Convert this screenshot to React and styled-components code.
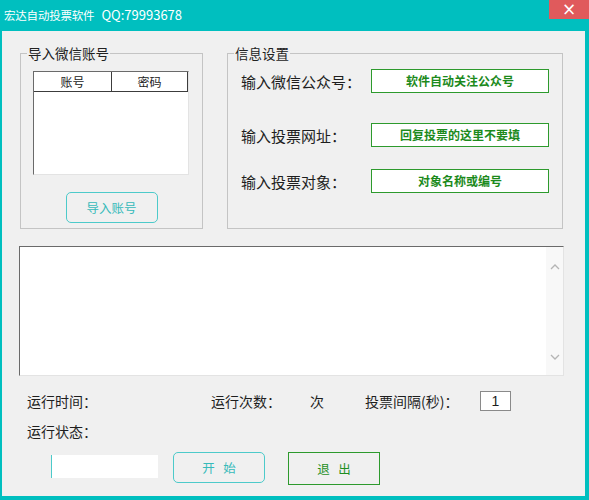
import styled, { createGlobalStyle } from "styled-components";

const GlobalStyle = createGlobalStyle`
  html, body {
    margin: 0;
    padding: 0;
    background: #ffffff;
  }
  * {
    box-sizing: border-box;
  }
`;

const FONT = `"Noto Sans CJK SC", "Noto Sans", "Liberation Sans", sans-serif`;

function App() {
  return (
    <>
      <GlobalStyle />
      <Window>
        <TitleBar>
          <Title>
            宏达自动投票软件<QQ>QQ:79993678</QQ>
          </Title>
          <CloseButton>×</CloseButton>
        </TitleBar>
        <Client>
          <TopRow>
            <GroupBox $width={183}>
              <Legend>导入微信账号</Legend>
              <AccountList>
                <ListHeader>
                  <HeaderCell $width={78}>账号</HeaderCell>
                  <HeaderCell $width={78} $last>
                    密码
                  </HeaderCell>
                </ListHeader>
              </AccountList>
              <RoundButton $width={92} $mt={17}>
                导入账号
              </RoundButton>
            </GroupBox>
            <GroupBox $width={336}>
              <Legend>信息设置</Legend>
              <SettingRow $mt={6}>
                <SettingLabel>输入微信公众号：</SettingLabel>
                <GreenField>软件自动关注公众号</GreenField>
              </SettingRow>
              <SettingRow $mt={30}>
                <SettingLabel>输入投票网址：</SettingLabel>
                <GreenField>回复投票的这里不要填</GreenField>
              </SettingRow>
              <SettingRow $mt={22}>
                <SettingLabel>输入投票对象：</SettingLabel>
                <GreenField>对象名称或编号</GreenField>
              </SettingRow>
            </GroupBox>
          </TopRow>

          <LogBox>
            <LogText />
            <ScrollBar>
              <ScrollArrow viewBox="0 0 10 6">
                <path d="M1 5 L5 1 L9 5" />
              </ScrollArrow>
              <ScrollArrow viewBox="0 0 10 6">
                <path d="M1 1 L5 5 L9 1" />
              </ScrollArrow>
            </ScrollBar>
          </LogBox>

          <StatusRow $mt={14}>
            <StatusCell $width={184}>运行时间：</StatusCell>
            <StatusCell $width={99}>运行次数：</StatusCell>
            <StatusCell $width={55}>次</StatusCell>
            <StatusCell $width={115}>投票间隔(秒)：</StatusCell>
            <IntervalBox>1</IntervalBox>
          </StatusRow>
          <StatusRow $mt={8}>
            <StatusCell $width={100}>运行状态：</StatusCell>
          </StatusRow>

          <BottomRow>
            <StateInput />
            <RoundButton $width={92} $mt={0}>
              开&nbsp;&nbsp;&nbsp;始
            </RoundButton>
            <ExitButton>退&nbsp;&nbsp;&nbsp;出</ExitButton>
          </BottomRow>
        </Client>
      </Window>
    </>
  );
}

export default App;

const Window = styled.div`
  width: 589px;
  height: 500px;
  background: #00bfbf;
  display: flex;
  flex-direction: column;
  font-family: ${FONT};
`;

const TitleBar = styled.div`
  height: 31px;
  display: flex;
  align-items: flex-start;
  color: #ffffff;
`;

const Title = styled.div`
  padding: 7px 0 0 4px;
  font-size: 11.5px;
  line-height: 16px;
  letter-spacing: -0.2px;
`;

const QQ = styled.span`
  margin-left: 7px;
  font-size: 13px;
  letter-spacing: 0;
`;

const CloseButton = styled.div`
  margin-left: auto;
  width: 40px;
  height: 19px;
  background: #e05a5c;
  color: #ffffff;
  font-size: 17px;
  line-height: 18px;
  text-align: center;
  font-family: "DejaVu Sans", sans-serif;
`;

const Client = styled.div`
  flex: 1;
  margin: 0 4px 4px 2px;
  background: #f0f0f0;
  padding: 12px 0 0 18px;
  display: flex;
  flex-direction: column;
`;

const TopRow = styled.div`
  display: flex;
  gap: 24px;
`;

const GroupBox = styled.fieldset`
  margin: 0;
  width: ${(p) => p.$width}px;
  height: 186px;
  padding: 0 0 0 12px;
  border: 1px solid #c4c4c4;
  display: flex;
  flex-direction: column;
`;

const Legend = styled.legend`
  margin-left: -6px;
  padding: 0 1px;
  font-size: 13.5px;
  line-height: 20px;
  color: #222222;
`;

const AccountList = styled.div`
  margin-top: 8px;
  width: 156px;
  height: 104px;
  background: #ffffff;
  border-top: 1px solid #6a6a6a;
  border-left: 1px solid #6a6a6a;
  border-right: 1px solid #e3e3e3;
  border-bottom: 1px solid #e3e3e3;
`;

const ListHeader = styled.div`
  display: flex;
  height: 20px;
  border-bottom: 1px solid #3c3c3c;
  border-right: 1px solid #3c3c3c;
`;

const HeaderCell = styled.div`
  width: ${(p) => p.$width}px;
  flex: ${(p) => (p.$last ? 1 : "none")};
  border-right: ${(p) => (p.$last ? "none" : "1px solid #3c3c3c")};
  font-size: 12px;
  line-height: 19px;
  text-align: center;
  color: #222222;
`;

const RoundButton = styled.div`
  margin-top: ${(p) => p.$mt}px;
  align-self: ${(p) => (p.$mt ? "center" : "auto")};
  margin-left: ${(p) => (p.$mt ? "-12px" : "0")};
  width: ${(p) => p.$width}px;
  height: 31px;
  border: 1px solid #4ccaca;
  border-radius: 5px;
  color: #36baba;
  font-size: 12.5px;
  line-height: 29px;
  text-align: center;
  background: #f0f0f0;
`;

const SettingRow = styled.div`
  margin-top: ${(p) => p.$mt}px;
  display: flex;
  align-items: center;
  height: 24px;
`;

const SettingLabel = styled.div`
  width: 131px;
  padding-left: 1px;
  font-size: 15px;
  color: #1e1e1e;
  white-space: nowrap;
`;

const GreenField = styled.div`
  width: 178px;
  height: 24px;
  border: 1px solid #2d9a2d;
  background: #ffffff;
  color: #1c8a1c;
  font-weight: bold;
  font-size: 12px;
  line-height: 21px;
  text-align: center;
`;

const LogBox = styled.div`
  margin: 17px 0 0 -1px;
  width: 545px;
  height: 130px;
  background: #ffffff;
  display: flex;
  border-top: 1px solid #6a6a6a;
  border-left: 1px solid #6a6a6a;
  border-right: 1px solid #e3e3e3;
  border-bottom: 1px solid #e3e3e3;
`;

const LogText = styled.div`
  flex: 1;
`;

const ScrollBar = styled.div`
  width: 17px;
  background: #f8f8f8;
  display: flex;
  flex-direction: column;
  justify-content: space-between;
  align-items: center;
  padding: 17px 0 15px;
`;

const ScrollArrow = styled.svg`
  width: 10px;
  height: 6px;
  fill: none;
  stroke: #b5b5b5;
  stroke-width: 1.3;
`;

const StatusRow = styled.div`
  margin-top: ${(p) => p.$mt}px;
  display: flex;
  align-items: center;
  height: 22px;
  padding-left: 7px;
`;

const StatusCell = styled.div`
  width: ${(p) => p.$width}px;
  font-size: 14px;
  color: #1e1e1e;
  white-space: nowrap;
`;

const IntervalBox = styled.div`
  width: 31px;
  height: 20px;
  border: 1px solid #8a8a8a;
  background: #ffffff;
  font-size: 14px;
  line-height: 18px;
  text-align: center;
  color: #1e1e1e;
  font-family: "Liberation Sans", sans-serif;
`;

const BottomRow = styled.div`
  margin-top: 10px;
  display: flex;
  align-items: flex-start;
  padding-left: 31px;
  gap: 15px;
`;

const StateInput = styled.div`
  margin-top: 3px;
  width: 107px;
  height: 23px;
  background: #ffffff;
  border-left: 1px solid #4ccaca;
`;

const ExitButton = styled.div`
  margin-left: 8px;
  width: 92px;
  height: 33px;
  border: 1px solid #2d9a2d;
  color: #1f8f1f;
  font-size: 12.5px;
  line-height: 31px;
  text-align: center;
  background: #f0f0f0;
`;
